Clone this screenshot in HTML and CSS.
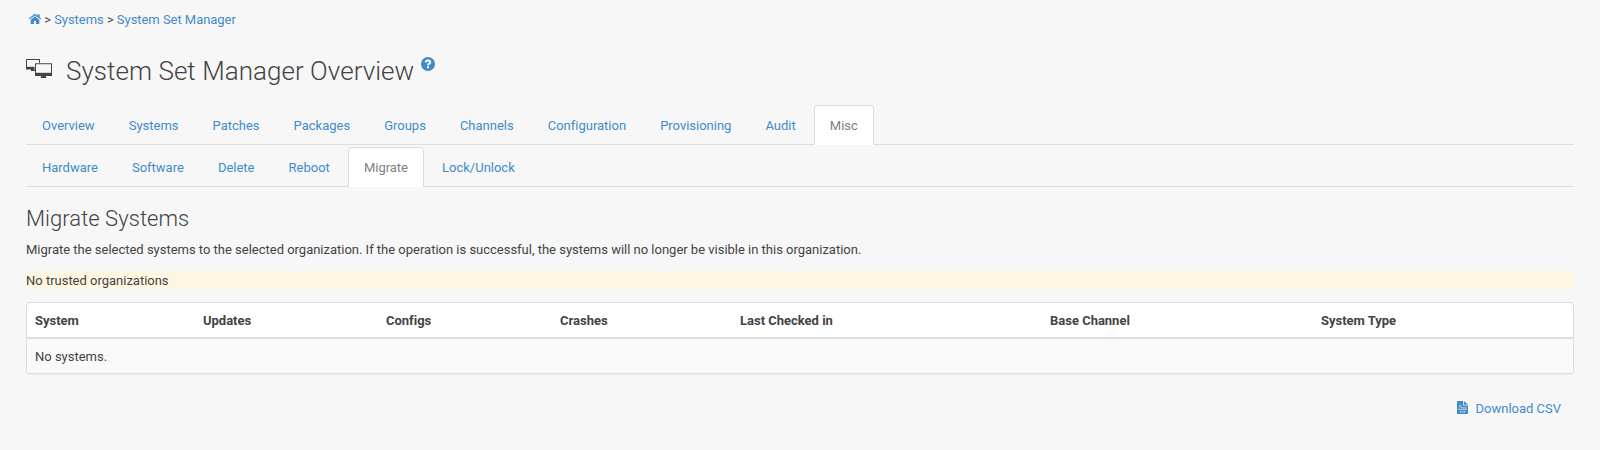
FILE: index.html
```
<!DOCTYPE html>
<html lang="en">
<head>
<meta charset="utf-8">
<title>System Set Manager</title>
<link rel="stylesheet" href="styles.css">
</head>
<body>
<nav class="breadcrumb">
  <a href="#" class="home" aria-label="Home"><svg class="icon-home" viewBox="0 0 12 10"><path d="M6 2.300 10.300 5.900V9.400q0 .6-.6.6H7V7H5v3H2.300q-.6 0-.6-.6V5.900z"/><path class="roof" d="M8.700.5h1.700v2.600l1.600 1.350-.7.850L6 1.200.700 5.300l-.7-.850L5.300.300q.7-.5 1.400 0l2 1.600z"/></svg></a>
  &gt; <a href="#">Systems</a> &gt; <a href="#">System Set Manager</a>
</nav>
<h1 class="title">
  <svg class="icon-systems" viewBox="0 0 26 20"><path class="frame" d="M0 .5Q0 0 .5 0h13q.5 0 .5.500V10.500H9V12H5v-1.500H.5Q0 10.500 0 10z"/><path class="screen" d="M1 1h12v6.800H1z"/><path class="gap" d="M8.500 3.800H14V11H8.500z"/><path class="frame" d="M9 4.700q0-.5.500-.5h16q.5 0 .5.500V16.500q0 .5-.5.500H20v1.200l.8.800h-6.600l.8-.8V17H9.500q-.5 0-.5-.5z"/><path class="screen" d="M10 5.200h15v8.600H10z"/></svg>
  <span>System Set Manager Overview</span>
  <a href="#" class="help" aria-label="Help"><svg class="icon-help" viewBox="0 0 14 14"><circle cx="7" cy="7" r="7"/><path class="mark" d="M4.600 5.300C4.900 4 5.800 3.400 7 3.400c1.300 0 2.200.7 2.200 1.800C9.200 6.600 7 6.600 7 8.300"/><path class="dot" d="M6 9.300H8V11.200H6z"/></svg></a>
</h1>
<ul class="tabs">
  <li><a href="#">Overview</a></li>
  <li><a href="#">Systems</a></li>
  <li><a href="#">Patches</a></li>
  <li><a href="#">Packages</a></li>
  <li><a href="#">Groups</a></li>
  <li><a href="#">Channels</a></li>
  <li><a href="#">Configuration</a></li>
  <li><a href="#">Provisioning</a></li>
  <li><a href="#">Audit</a></li>
  <li class="active"><a href="#">Misc</a></li>
</ul>
<ul class="tabs">
  <li><a href="#">Hardware</a></li>
  <li><a href="#">Software</a></li>
  <li><a href="#">Delete</a></li>
  <li><a href="#">Reboot</a></li>
  <li class="active"><a href="#">Migrate</a></li>
  <li><a href="#">Lock/Unlock</a></li>
</ul>
<h2 class="subtitle">Migrate Systems</h2>
<p class="intro">Migrate the selected systems to the selected organization. If the operation is successful, the systems will no longer be visible in this organization.</p>
<p class="warning">No trusted organizations</p>
<div class="panel">
  <table class="systems">
    <colgroup><col class="c-system"><col class="c-updates"><col class="c-configs"><col class="c-crashes"><col class="c-checked"><col class="c-channel"><col></colgroup>
    <thead>
      <tr><th>System</th><th>Updates</th><th>Configs</th><th>Crashes</th><th>Last Checked in</th><th>Base Channel</th><th>System Type</th></tr>
    </thead>
    <tbody>
      <tr><td colspan="7">No systems.</td></tr>
    </tbody>
  </table>
</div>
<div class="download">
  <a href="#"><svg class="icon-csv" viewBox="0 0 11 13"><path d="M.5 0H6.200v4.500H11v8q0 .5-.5.500H.5Q0 13 0 12.500V.5Q0 0 .5 0z"/><path d="M7 0l4 3.700H7z"/><path class="line" d="M2 4l3 3M4.300 4.300 2.200 6.500M5 6.800h4.500M1 8.300h9"/><path class="line dashes" d="M2.800 10.700h5.700"/></svg>Download CSV</a>
</div>
</body>
</html>
```
FILE: styles.css
```
* { box-sizing: border-box; }
body {
  margin: 0;
  padding: 10px 26px 0;
  background: #f7f7f7;
  color: #434343;
  font: 13px/18px Roboto, sans-serif;
  letter-spacing: -.01px;
}
a { color: #428bca; text-decoration: none; }
.breadcrumb { padding-left: 3px; height: 20px; line-height: 20px; letter-spacing: -.04px; }
.icon-home { width: 12px; height: 10px; fill: #428bca; }
.roof { stroke: #428bca; stroke-width: .3; }
.title {
  display: flex;
  height: 40px;
  margin: 21px 0 14px;
  font-size: 26px;
  font-weight: 300;
  line-height: 40px;
  letter-spacing: .04px;
}
.icon-systems { width: 26px; height: 20px; margin: 8px 14px 0 0; }
.frame { fill: #434343; }
.screen, .gap { fill: #f7f7f7; }
.help { display: flex; margin: 6px 0 0 7px; }
.icon-help { width: 14px; height: 14px; fill: #428bca; }
.icon-help .mark { fill: none; stroke: #fff; stroke-width: 2; }
.icon-help .dot { fill: #fff; }
.tabs {
  display: flex;
  gap: 2.08px;
  height: 40px;
  margin: 0 0 2px;
  padding: 0;
  list-style: none;
  border-bottom: 1px solid #ddd;
}
.tabs a {
  display: block;
  height: 40px;
  padding: 11px 15px 9px;
  border: 1px solid transparent;
  border-bottom: 0;
  border-radius: 4px 4px 0 0;
}
.tabs .active a { background: #fff; border-color: #ddd; color: #808080; }
.subtitle {
  margin: 19px 0 9px;
  font-size: 22px;
  font-weight: 300;
  line-height: 26px;
  letter-spacing: .04px;
}
.intro { margin: 0 0 12px; }
.warning { height: 18px; margin: 0 0 13px; background: #fdf7e2; line-height: 20px; }
.panel {
  height: 72px;
  border: 1px solid #ddd;
  border-radius: 4px;
  background: #fff;
  box-shadow: 0 1px 1px rgba(0, 0, 0, .05);
  overflow: hidden;
}
.systems { width: 100%; table-layout: fixed; border-collapse: separate; border-spacing: 0; }
.systems th, .systems td { padding: 9px 8px 7px; text-align: left; }
.systems th { font-weight: 700; border-bottom: 2px solid #ddd; }
.systems td { background: #f9f9f9; }
.c-system { width: 168px; }
.c-updates { width: 183px; }
.c-configs { width: 174px; }
.c-crashes { width: 180px; }
.c-checked { width: 310px; }
.c-channel { width: 271px; }
.download { display: flex; justify-content: flex-end; margin-top: 26px; padding-right: 13px; }
.icon-csv { width: 11px; height: 13px; margin-right: 8px; vertical-align: -1px; fill: #428bca; }
.icon-csv .line { fill: none; stroke: #f7f7f7; stroke-width: .7; }
.icon-csv .dashes { stroke-width: 1.500; stroke-dasharray: 1.500 .6; opacity: .6; }
```
